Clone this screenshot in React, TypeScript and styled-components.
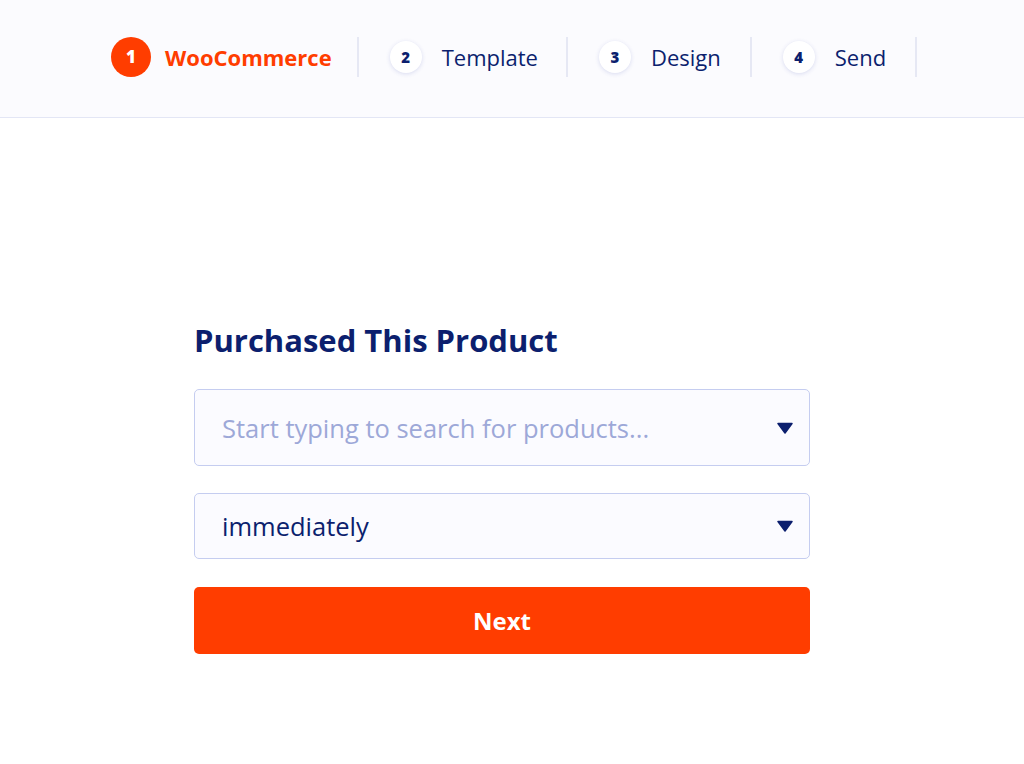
import React from "react";
import styled, { createGlobalStyle } from "styled-components";

const Global = createGlobalStyle`
  html, body { margin: 0; padding: 0; background: #ffffff; }
  body { font-family: "Open Sans", "Noto Sans", sans-serif; color: #0c1f6e; }
  * { box-sizing: border-box; }
`;

const Page = styled.div`
  width: 1024px;
  min-height: 764px;
  background: #ffffff;
`;

const Header = styled.header`
  height: 118px;
  background: #fbfbfe;
  border-bottom: 1px solid #e3e6f5;
  display: flex;
  align-items: center;
  padding-left: 111px;
  padding-bottom: 4px;
`;

const Step = styled.div<{ $first?: boolean; $pr: number }>`
  display: flex;
  align-items: center;
  height: 40px;
  padding-left: ${(p) => (p.$first ? 0 : 31)}px;
  padding-right: ${(p) => p.$pr}px;
  border-right: 2px solid #e6e8f4;
`;

const Circle = styled.div<{ $active?: boolean }>`
  width: ${(p) => (p.$active ? 40 : 32)}px;
  height: ${(p) => (p.$active ? 40 : 32)}px;
  border-radius: 50%;
  display: flex;
  align-items: center;
  justify-content: center;
  font-weight: 800;
  font-size: ${(p) => (p.$active ? 17 : 15)}px;
  background: ${(p) => (p.$active ? "#ff3d00" : "#ffffff")};
  color: ${(p) => (p.$active ? "#ffffff" : "#0c1f6e")};
  box-shadow: ${(p) => (p.$active ? "none" : "0 1px 4px rgba(60, 80, 180, 0.18)")};
  margin-right: ${(p) => (p.$active ? 14 : 20)}px;
`;

const StepLabel = styled.span<{ $active?: boolean }>`
  font-size: 22px;
  font-weight: ${(p) => (p.$active ? 700 : 400)};
  color: ${(p) => (p.$active ? "#ff3d00" : "#0c1f6e")};
`;

const Main = styled.main`
  display: flex;
  flex-direction: column;
  width: 616px;
  margin: 0 auto;
  padding-top: 202px;
  transform: translateX(-10px);
`;

const Title = styled.h1`
  margin: 0 0 29px;
  font-size: 31px;
  line-height: 40px;
  font-weight: 700;
  color: #0c1f6e;
`;

const Select = styled.div<{ $h: number; $gap: number; $placeholder?: boolean }>`
  height: ${(p) => p.$h}px;
  border: 1.5px solid #c5cdf0;
  border-radius: 5px;
  background: #fbfbff;
  display: flex;
  align-items: center;
  justify-content: space-between;
  padding: 0 16px 0 27px;
  margin-bottom: ${(p) => p.$gap}px;
  font-size: 25.5px;
  color: ${(p) => (p.$placeholder ? "#9da8d8" : "#0c1f6e")};
`;

const Button = styled.button`
  height: 67px;
  border: none;
  border-radius: 5px;
  background: #ff3d00;
  color: #ffffff;
  font-family: inherit;
  font-size: 24px;
  font-weight: 700;
  cursor: pointer;
`;

const Caret = () => (
  <svg width="16" height="12" viewBox="0 0 16 12">
    <path d="M1 1.5 L15 1.5 L8 11 Z" fill="#0c1f6e" stroke="#0c1f6e" strokeWidth="1.5" strokeLinejoin="round" />
  </svg>
);

const steps = [
  { n: 1, label: "WooCommerce", pr: 25 },
  { n: 2, label: "Template", pr: 28 },
  { n: 3, label: "Design", pr: 29 },
  { n: 4, label: "Send", pr: 29 },
];

export default function App() {
  return (
    <Page>
      <Global />
      <Header>
        {steps.map((s, i) => (
          <Step key={s.n} $first={i === 0} $pr={s.pr}>
            <Circle $active={i === 0}>{s.n}</Circle>
            <StepLabel $active={i === 0}>{s.label}</StepLabel>
          </Step>
        ))}
      </Header>
      <Main>
        <Title>Purchased This Product</Title>
        <Select $h={77} $gap={27} $placeholder>
          <span>Start typing to search for products...</span>
          <Caret />
        </Select>
        <Select $h={66} $gap={28}>
          <span>immediately</span>
          <Caret />
        </Select>
        <Button>Next</Button>
      </Main>
    </Page>
  );
}
